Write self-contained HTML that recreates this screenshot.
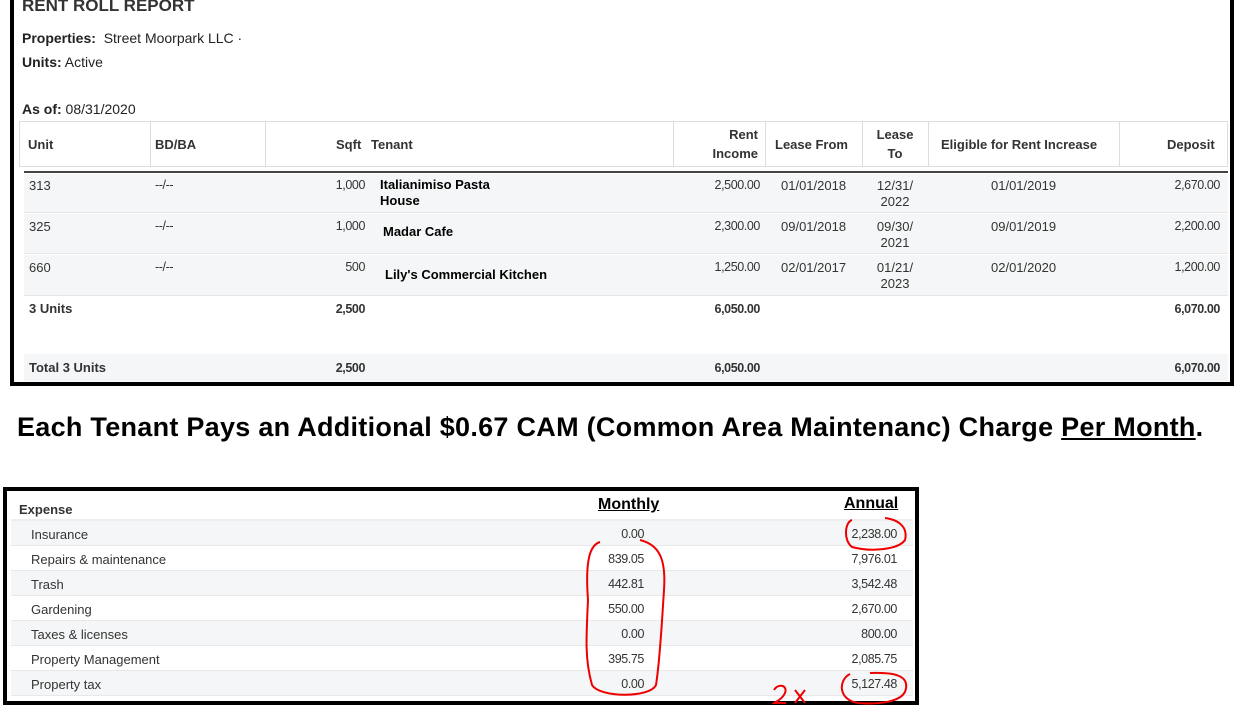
<!DOCTYPE html>
<html><head><meta charset="utf-8"><style>
*{margin:0;padding:0;box-sizing:border-box}
body{width:1250px;height:705px;background:#fff;font-family:"Liberation Sans",Arial,sans-serif;color:#333;position:relative;overflow:hidden}
.a{position:absolute;white-space:nowrap}
.box1{position:absolute;left:10px;top:-4px;width:1224px;height:390px;border:4px solid #000}
.box2{position:absolute;left:3px;top:487px;width:916px;height:218px;border:4px solid #000}
.c{position:absolute;font-size:13px}
.b{font-weight:bold}
.r{text-align:right}
.n{font-size:12.5px;letter-spacing:-0.4px}
</style></head><body>
<div class="box1"></div>
<div class="a b" style="left:22px;top:-4px;font-size:17px;color:#333">RENT ROLL REPORT</div>
<div class="a" style="left:22px;top:30px;font-size:14px;color:#222"><b>Properties:</b>&nbsp; Street Moorpark LLC ·</div>
<div class="a" style="left:22px;top:54px;font-size:14px;color:#222"><b>Units:</b> Active</div>
<div class="a" style="left:22px;top:101px;font-size:14px;color:#222"><b>As of:</b> 08/31/2020</div>

<div class="a" style="left:19px;top:121px;width:1209px;height:46px;border:1px solid #ddd;background:#fff"></div>
<div class="a" style="left:150px;top:122px;width:1px;height:45px;background:#ddd"></div>
<div class="a" style="left:265px;top:122px;width:1px;height:45px;background:#ddd"></div>
<div class="a" style="left:673px;top:122px;width:1px;height:45px;background:#ddd"></div>
<div class="a" style="left:765px;top:122px;width:1px;height:45px;background:#ddd"></div>
<div class="a" style="left:862px;top:122px;width:1px;height:45px;background:#ddd"></div>
<div class="a" style="left:928px;top:122px;width:1px;height:45px;background:#ddd"></div>
<div class="a" style="left:1119px;top:122px;width:1px;height:45px;background:#ddd"></div>
<div class="c b" style="left:28px;top:137px">Unit</div>
<div class="c b" style="left:155px;top:137px">BD/BA</div>
<div class="c b" style="left:336px;top:137px">Sqft</div>
<div class="c b" style="left:371px;top:137px">Tenant</div>
<div class="c b r" style="left:690px;top:125px;width:68px;line-height:19px">Rent<br>Income</div>
<div class="c b" style="left:775px;top:137px">Lease From</div>
<div class="c b" style="left:862px;top:125px;width:66px;text-align:center;line-height:19px">Lease<br>To</div>
<div class="c b" style="left:941px;top:137px">Eligible for Rent Increase</div>
<div class="c b" style="left:1167px;top:137px">Deposit</div>
<div class="a" style="left:24px;top:171px;width:1204px;height:2px;background:#444"></div>

<div class="a" style="left:24px;top:174px;width:1204px;height:39px;background:#f5f6f7;border-bottom:1px solid #e6e6e6"></div>
<div class="a" style="left:24px;top:214px;width:1204px;height:40px;background:#f5f6f7;border-bottom:1px solid #e6e6e6"></div>
<div class="a" style="left:24px;top:255px;width:1204px;height:41px;background:#f5f6f7;border-bottom:1px solid #e6e6e6"></div>
<div class="a" style="left:24px;top:354px;width:1204px;height:27px;background:#f5f6f7"></div>

<div class="c" style="left:29px;top:178px">313</div>
<div class="c n" style="left:155px;top:178px">--/--</div>
<div class="c n r" style="left:300px;top:178px;width:65px">1,000</div>
<div class="c b" style="left:380px;top:177px;color:#000;line-height:16px">Italianimiso Pasta<br>House</div>
<div class="c n r" style="left:680px;top:178px;width:80px">2,500.00</div>
<div class="c" style="left:781px;top:178px">01/01/2018</div>
<div class="c" style="left:862px;top:178px;width:66px;text-align:center;line-height:16px">12/31/<br>2022</div>
<div class="c" style="left:991px;top:178px">01/01/2019</div>
<div class="c n r" style="left:1140px;top:178px;width:80px">2,670.00</div>

<div class="c" style="left:29px;top:219px">325</div>
<div class="c n" style="left:155px;top:219px">--/--</div>
<div class="c n r" style="left:300px;top:219px;width:65px">1,000</div>
<div class="c b" style="left:383px;top:224px;color:#000">Madar Cafe</div>
<div class="c n r" style="left:680px;top:219px;width:80px">2,300.00</div>
<div class="c" style="left:781px;top:219px">09/01/2018</div>
<div class="c" style="left:862px;top:219px;width:66px;text-align:center;line-height:16px">09/30/<br>2021</div>
<div class="c" style="left:991px;top:219px">09/01/2019</div>
<div class="c n r" style="left:1140px;top:219px;width:80px">2,200.00</div>

<div class="c" style="left:29px;top:260px">660</div>
<div class="c n" style="left:155px;top:260px">--/--</div>
<div class="c n r" style="left:300px;top:260px;width:65px">500</div>
<div class="c b" style="left:385px;top:267px;color:#000">Lily's Commercial Kitchen</div>
<div class="c n r" style="left:680px;top:260px;width:80px">1,250.00</div>
<div class="c" style="left:781px;top:260px">02/01/2017</div>
<div class="c" style="left:862px;top:260px;width:66px;text-align:center;line-height:16px">01/21/<br>2023</div>
<div class="c" style="left:991px;top:260px">02/01/2020</div>
<div class="c n r" style="left:1140px;top:260px;width:80px">1,200.00</div>

<div class="c b" style="left:29px;top:301px">3 Units</div>
<div class="c b n r" style="left:300px;top:302px;width:65px">2,500</div>
<div class="c b n r" style="left:680px;top:302px;width:80px">6,050.00</div>
<div class="c b n r" style="left:1140px;top:302px;width:80px">6,070.00</div>

<div class="c b" style="left:29px;top:360px">Total 3 Units</div>
<div class="c b n r" style="left:300px;top:361px;width:65px">2,500</div>
<div class="c b n r" style="left:680px;top:361px;width:80px">6,050.00</div>
<div class="c b n r" style="left:1140px;top:361px;width:80px">6,070.00</div>

<div class="a b" style="left:17px;top:412px;font-size:27px;letter-spacing:0.28px;color:#000">Each Tenant Pays an Additional $0.67 CAM (Common Area Maintenanc) Charge <u>Per Month</u>.</div>

<div class="box2"></div>
<div class="a" style="left:11px;top:496px;width:902px;height:25px;background:#fff;border-bottom:2px solid #eee"></div>
<div class="a" style="left:11px;top:521px;width:902px;height:25px;background:#f5f6f7;border-bottom:1px solid #e8e8e8"></div>
<div class="a" style="left:11px;top:546px;width:902px;height:25px;background:#fff;border-bottom:1px solid #e8e8e8"></div>
<div class="a" style="left:11px;top:571px;width:902px;height:25px;background:#f5f6f7;border-bottom:1px solid #e8e8e8"></div>
<div class="a" style="left:11px;top:596px;width:902px;height:25px;background:#fff;border-bottom:1px solid #e8e8e8"></div>
<div class="a" style="left:11px;top:621px;width:902px;height:25px;background:#f5f6f7;border-bottom:1px solid #e8e8e8"></div>
<div class="a" style="left:11px;top:646px;width:902px;height:25px;background:#fff;border-bottom:1px solid #e8e8e8"></div>
<div class="a" style="left:11px;top:671px;width:902px;height:25px;background:#f5f6f7;border-bottom:1px solid #e8e8e8"></div>

<div class="c b" style="left:19px;top:502px">Expense</div>
<div class="a b" style="left:598px;top:496px;font-size:16px;color:#000;text-decoration:underline">Monthly</div>
<div class="a b" style="left:844px;top:495px;font-size:16px;color:#000;text-decoration:underline">Annual</div>

<div class="c" style="left:31px;top:527px">Insurance</div>
<div class="c" style="left:31px;top:552px">Repairs &amp; maintenance</div>
<div class="c" style="left:31px;top:577px">Trash</div>
<div class="c" style="left:31px;top:602px">Gardening</div>
<div class="c" style="left:31px;top:627px">Taxes &amp; licenses</div>
<div class="c" style="left:31px;top:652px">Property Management</div>
<div class="c" style="left:31px;top:677px">Property tax</div>

<div class="c n r" style="left:560px;top:527px;width:84px">0.00</div>
<div class="c n r" style="left:560px;top:552px;width:84px">839.05</div>
<div class="c n r" style="left:560px;top:577px;width:84px">442.81</div>
<div class="c n r" style="left:560px;top:602px;width:84px">550.00</div>
<div class="c n r" style="left:560px;top:627px;width:84px">0.00</div>
<div class="c n r" style="left:560px;top:652px;width:84px">395.75</div>
<div class="c n r" style="left:560px;top:677px;width:84px">0.00</div>

<div class="c n r" style="left:800px;top:527px;width:97px">2,238.00</div>
<div class="c n r" style="left:800px;top:552px;width:97px">7,976.01</div>
<div class="c n r" style="left:800px;top:577px;width:97px">3,542.48</div>
<div class="c n r" style="left:800px;top:602px;width:97px">2,670.00</div>
<div class="c n r" style="left:800px;top:627px;width:97px">800.00</div>
<div class="c n r" style="left:800px;top:652px;width:97px">2,085.75</div>
<div class="c n r" style="left:800px;top:677px;width:97px">5,127.48</div>

<svg class="a" style="left:0;top:0" width="1250" height="705" fill="none" stroke="#e00" stroke-width="2">
<path d="M600 542 C590 545 585 560 588 600 C586 640 585 660 592 685 C600 698 650 698 656 685 C660 660 662 620 664 590 C666 560 660 545 640 540"/>
<path d="M852 520 C845 522 843 540 852 547 C870 552 898 550 905 540 C908 528 900 520 885 518"/>
<path d="M850 674 C838 680 838 700 858 703 C885 705 905 700 906 688 C908 676 895 672 870 673"/>
<path d="M774 690 C778 683 788 685 785 693 C782 700 775 702 774 703 L786 703"/>
<path d="M795 690 L805 703 M805 690 L795 703"/>
</svg>
</body></html>
